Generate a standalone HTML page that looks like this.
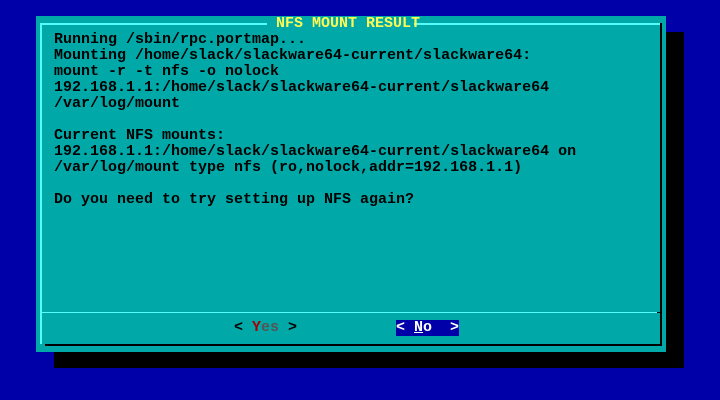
<html><head><style>
body{margin:0;width:720px;height:400px;background:#0000a8;position:relative;overflow:hidden;font-family:"Liberation Mono",monospace;font-size:15px;font-weight:bold}
div{position:absolute}
.t{left:54px;color:#000;white-space:pre;line-height:16px;height:16px}
</style></head><body>
<div style="left:666px;top:32px;width:18px;height:336px;background:#000"></div>
<div style="left:54px;top:352px;width:630px;height:16px;background:#000"></div>
<div style="left:36px;top:16px;width:630px;height:336px;background:#00a8a8"></div>
<div style="left:40px;top:23px;width:2px;height:321px;background:#54fcfc"></div>
<div style="left:40px;top:23px;width:621px;height:2px;background:#54fcfc"></div>
<div style="left:660px;top:23px;width:2px;height:323px;background:#000"></div>
<div style="left:45px;top:344px;width:617px;height:2px;background:#000"></div>
<div style="left:42px;top:312px;width:615px;height:1px;background:#54fcfc"></div>
<div style="left:657px;top:312px;width:3px;height:1px;background:#000"></div>
<div class="t" style="left:267px;top:16px;width:147px;background:#00a8a8;color:#fcfc54"> NFS MOUNT RESULT</div>
<div class="t" style="top:32px">Running /sbin/rpc.portmap...</div>
<div class="t" style="top:48px">Mounting /home/slack/slackware64-current/slackware64:</div>
<div class="t" style="top:64px">mount -r -t nfs -o nolock</div>
<div class="t" style="top:80px">192.168.1.1:/home/slack/slackware64-current/slackware64</div>
<div class="t" style="top:96px">/var/log/mount</div>
<div class="t" style="top:128px">Current NFS mounts:</div>
<div class="t" style="top:144px">192.168.1.1:/home/slack/slackware64-current/slackware64 on</div>
<div class="t" style="top:160px">/var/log/mount type nfs (ro,nolock,addr=192.168.1.1)</div>
<div class="t" style="top:192px">Do you need to try setting up NFS again?</div>
<div class="t" style="left:234px;top:320px">&lt; <span style="color:#a80000">Y</span><span style="color:#545454">es</span> &gt;</div>
<div class="t" style="left:396px;top:320px;width:63px;background:#0000a8;color:#fff">&lt; <span style="text-decoration:underline">N</span>o  &gt;</div>
</body></html>
